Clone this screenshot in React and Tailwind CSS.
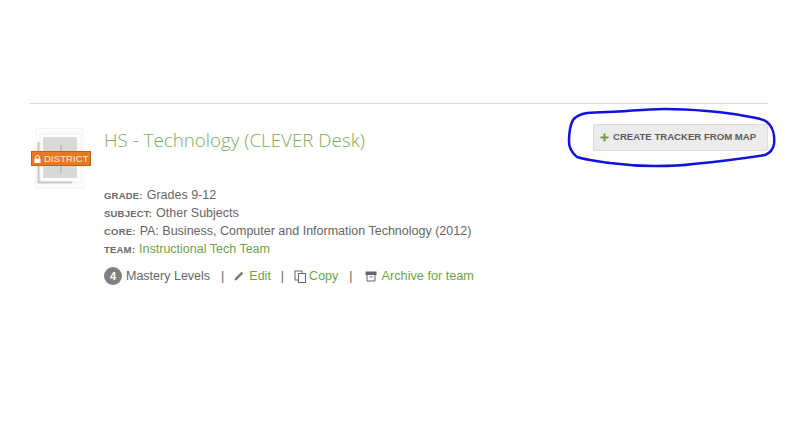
import React from 'react';

const Row = ({ label, children }) => (
    <div className="flex items-baseline gap-[4px] h-[18.3px] leading-[18.3px]">
        <span className="text-[9.5px] tracking-[0.2px] font-bold uppercase text-[#6a6a6a]">{label}:</span>
        {children}
    </div>
);

const Sep = ({ className }) => <span className={`text-[#666666] ${className}`}>|</span>;

const App = () => {
    return (
        <div className="relative w-[800px] h-[445px] bg-white overflow-hidden font-['Liberation_Sans',Arial,sans-serif] text-[#666666]">
            <div className="pt-[103px] pl-[30px] w-[768px]">
                <div className="border-t border-[#d9d9d9]" />
                <div className="flex pt-[20px]">
                    {/* Map thumbnail with district badge */}
                    <div className="relative w-[74px] h-[70px] shrink-0">
                        <svg width="60" height="66" viewBox="0 0 60 66" className="ml-[2px] mt-[3px]">
                            <rect x="3.5" y="1.5" width="48" height="60" fill="#fcfcfc" stroke="#f4f4f4" />
                            <rect x="8" y="7" width="41" height="48" fill="#ffffff" stroke="#efefef" />
                            <rect x="11" y="10" width="34" height="41" fill="#d9d9d9" />
                            <path d="M6.5 15V55.5H40" fill="none" stroke="#c6c6c6" strokeWidth="2" />
                            <path d="M29 18V46" stroke="#a8a8a8" strokeWidth="1" />
                        </svg>
                        <div className="absolute left-[1px] top-[27px] w-[60px] h-[15px] flex items-center gap-[3px] pl-[2px] bg-[#e8791e] border border-[#b5641f] text-[9.7px] leading-none text-[#f7efe6]">
                            <svg width="7" height="8" viewBox="0 0 7 8" className="shrink-0">
                                <path d="M1.7 3.5V2.2a1.8 1.8 0 0 1 3.6 0V3.5" fill="none" stroke="#ffffff" strokeWidth="1" />
                                <rect x="0.5" y="3.5" width="6" height="4.5" fill="#ffffff" />
                            </svg>
                            <span>DISTRICT</span>
                        </div>
                    </div>
                    <div className="flex-1">
                        <div className="flex justify-between items-start">
                            <h1 className="font-['Open_Sans',sans-serif] font-light text-[18.8px] leading-[32px] text-[#7cad5a]">
                                HS - Technology (CLEVER Desk)
                            </h1>
                            <button className="flex items-center gap-[4px] w-[175px] h-[27px] pl-[6px] border border-[#dcdcdc] rounded-[2px] bg-[#ececec] text-[9.6px] font-bold text-[#5c5c5c]">
                                <svg width="9" height="9" viewBox="0 0 9 9">
                                    <path d="M4.5 0.5V8.5M0.5 4.5H8.5" stroke="#6f9f3c" strokeWidth="2" />
                                </svg>
                                CREATE TRACKER FROM MAP
                            </button>
                        </div>
                        <div className="mt-[29.5px] text-[12.5px]">
                            <Row label="Grade">Grades 9-12</Row>
                            <Row label="Subject">Other Subjects</Row>
                            <Row label="Core">PA: Business, Computer and Information Technology (2012)</Row>
                            <Row label="Team"><span className="text-[#6da544]">Instructional Tech Team</span></Row>
                        </div>
                        <div className="flex items-center h-[20px] mt-[7.5px] text-[12.5px]">
                            <span className="flex items-center justify-center w-[18px] h-[18px] rounded-full bg-[#808080] text-white text-[11px] font-bold">4</span>
                            <span className="ml-[4px]">Mastery Levels</span>
                            <Sep className="ml-[11px]" />
                            <svg width="12" height="12" viewBox="0 0 12 12" className="ml-[9px]">
                                <path d="M1.5 10.5L2.2 8L8.5 1.8L10.2 3.5L4 9.8Z" fill="#777777" />
                            </svg>
                            <span className="ml-[4px] text-[#6da544]">Edit</span>
                            <Sep className="ml-[10px]" />
                            <svg width="14" height="13" viewBox="0 0 14 13" className="ml-[10px]" fill="#ffffff" stroke="#666666">
                                <rect x="1" y="1" width="7" height="9" />
                                <rect x="4.5" y="3.5" width="7" height="9" />
                            </svg>
                            <span className="ml-[1px] text-[#6da544]">Copy</span>
                            <Sep className="ml-[11px]" />
                            <svg width="12" height="11" viewBox="0 0 12 11" className="ml-[12px]" fill="none" stroke="#666666">
                                <rect x="1" y="1" width="10" height="2.5" fill="#666666" />
                                <path d="M2 3.5V10H10V3.5M4.5 5.8H7.5" />
                            </svg>
                            <span className="ml-[5px] text-[12.7px] text-[#6da544]">Archive for team</span>
                        </div>
                    </div>
                </div>
            </div>
            {/* Hand-drawn annotation over the button */}
            <svg width="800" height="445" viewBox="0 0 800 445" className="absolute inset-0 pointer-events-none">
                <path d="M627 111C640 110 650 109 665 109C690 109 725 112 745 116C755 118 762 118 767 122C773 127 775 136 774 144C773 150 770 153 765 155C745 158 715 162 693 164C680 166 670 166 655 166C640 166 625 165 610 163C598 161 585 160 577 157C571 152 569 148 569 142C569 133 570 125 573 120C576 116 581 114 587 113C600 112 613 112 627 111Z" fill="none" stroke="#1212e0" strokeWidth="2.5" />
            </svg>
        </div>
    );
};

export default App;
